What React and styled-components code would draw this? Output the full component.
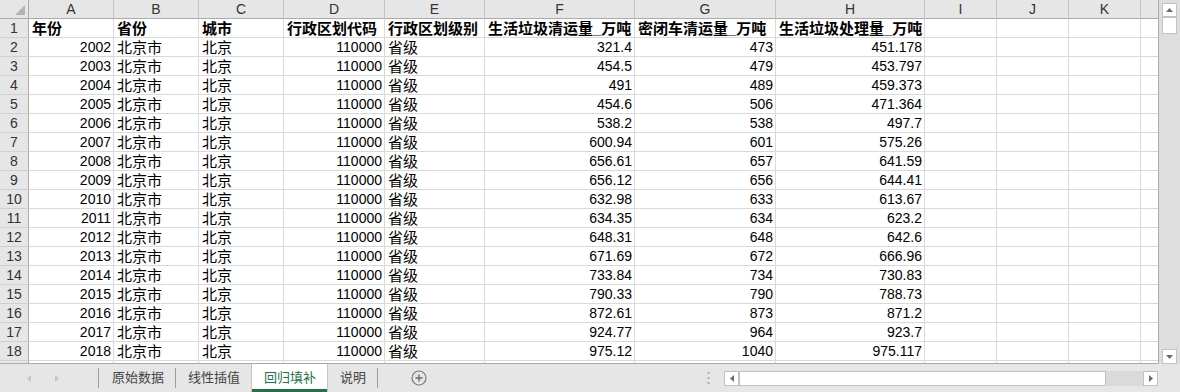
import React from "react"
import styled, {createGlobalStyle} from "styled-components"

const GlobalStyle = createGlobalStyle`
  body {
    margin: 0;
    background: #e6e6e6;
  }
`

const columns = [
  {key: "A", width: 85},
  {key: "B", width: 85},
  {key: "C", width: 85},
  {key: "D", width: 101},
  {key: "E", width: 100},
  {key: "F", width: 150},
  {key: "G", width: 141},
  {key: "H", width: 149},
  {key: "I", width: 72},
  {key: "J", width: 72},
  {key: "K", width: 72},
  {key: "", width: 18},
]

const heads = ["年份", "省份", "城市", "行政区划代码", "行政区划级别", "生活垃圾清运量_万吨", "密闭车清运量_万吨", "生活垃圾处理量_万吨"]

const values = [
  [2002, "321.4", "473", "451.178"],
  [2003, "454.5", "479", "453.797"],
  [2004, "491", "489", "459.373"],
  [2005, "454.6", "506", "471.364"],
  [2006, "538.2", "538", "497.7"],
  [2007, "600.94", "601", "575.26"],
  [2008, "656.61", "657", "641.59"],
  [2009, "656.12", "656", "644.41"],
  [2010, "632.98", "633", "613.67"],
  [2011, "634.35", "634", "623.2"],
  [2012, "648.31", "648", "642.6"],
  [2013, "671.69", "672", "666.96"],
  [2014, "733.84", "734", "730.83"],
  [2015, "790.33", "790", "788.73"],
  [2016, "872.61", "873", "871.2"],
  [2017, "924.77", "964", "923.7"],
  [2018, "975.12", "1040", "975.117"],
]

const tabs = ["原始数据", "线性插值", "回归填补", "说明"]

const Window = styled.div`
  width: 1180px;
  height: 392px;
  display: flex;
  flex-direction: column;
  overflow: hidden;
  background: #e6e6e6;
  font-family: "Liberation Sans", "Noto Sans CJK SC", sans-serif;
`
const Sheet = styled.div`
  display: flex;
  height: 364px;
`
const GridArea = styled.div`
  box-sizing: border-box;
  width: 1159px;
  height: 364px;
  overflow: hidden;
  background: #fff;
  border-right: 1px solid #ababab;
  border-bottom: 1px solid #ababab;
`
const Grid = styled.div`
  display: grid;
  grid-template-columns: 29px ${columns.map(c => c.width + "px").join(" ")};
  grid-auto-rows: 19px;
`
const Corner = styled.div`
  box-sizing: border-box;
  position: relative;
  background: #e6e6e6;
  border-right: 1px solid #ababab;
  border-bottom: 1px solid #ababab;

  &::after {
    content: '';
    position: absolute;
    right: 3px;
    bottom: 3px;
    border-left: 10px solid transparent;
    border-bottom: 10px solid #b4b4b4;
  }
`
const ColHead = styled.div`
  box-sizing: border-box;
  background: #e6e6e6;
  border-right: 1px solid #c4c4c4;
  border-bottom: 1px solid #ababab;
  color: #333;
  font-size: 14px;
  line-height: 18px;
  text-align: center;
`
const RowHead = styled.div`
  box-sizing: border-box;
  background: #e6e6e6;
  border-right: 1px solid #ababab;
  border-bottom: 1px solid #cfcfcf;
  color: #333;
  font-size: 14px;
  line-height: 18px;
  text-align: center;
`
const Cell = styled.div`
  box-sizing: border-box;
  border-right: 1px solid #d9d9d9;
  border-bottom: 1px solid #d9d9d9;
  padding: 1px 2px 0 3px;
  overflow: hidden;
  white-space: nowrap;
  color: #000;
  line-height: 17px;
  font-size: ${p => p.$num ? "14px" : "15px"};
  font-weight: ${p => p.$bold ? 700 : 400};
  text-align: ${p => p.$num ? "right" : "left"};
`
const VScroll = styled.div`
  display: flex;
  flex-direction: column;
  width: 21px;
  padding: 3px 3px 0 3px;
  box-sizing: border-box;
  background: #dedede;
`
const ScrollBox = styled.div`
  box-sizing: border-box;
  display: flex;
  align-items: center;
  justify-content: center;
  width: ${p => p.$w || "15px"};
  height: ${p => p.$h || "14px"};
  background: #fff;
  border: 1px solid #c2c2c2;
  flex-shrink: 0;
`
const Fill = styled.div`
  flex: 1;
`
const TabBar = styled.div`
  display: flex;
  height: 28px;
  align-items: stretch;
`
const Nav = styled.div`
  display: flex;
  align-items: center;
  gap: 24px;
  width: 100px;
  padding-left: 27px;
  box-sizing: border-box;
  border-right: 1px solid transparent;
  position: relative;

  &::after {
    content: '';
    position: absolute;
    right: 0;
    top: 4px;
    bottom: 4px;
    width: 1px;
    background: #9c9c9c;
  }
`
const Tab = styled.div`
  position: relative;
  display: flex;
  align-items: center;
  padding: 0 11px 0 12px;
  font-size: 13px;
  line-height: 16px;
  color: ${p => p.$active ? "#217346" : "#444"};
  background: ${p => p.$active ? "#fff" : "transparent"};
  border-right: 1px solid ${p => p.$active ? "#c6c6c6" : "transparent"};
  box-shadow: ${p => p.$active ? "inset 0 -3px 0 #217346, -1px 0 0 #c6c6c6" : "none"};

  &::after {
    content: '';
    display: ${p => p.$active ? "none" : "block"};
    position: absolute;
    right: -1px;
    top: 4px;
    bottom: 4px;
    width: 1px;
    background: #9c9c9c;
  }
`
const AddButton = styled.div`
  display: flex;
  align-items: center;
  margin-left: 33px;
`
const Dots = styled.div`
  display: flex;
  align-items: center;
  margin-left: 280px;
`
const HScroll = styled.div`
  display: flex;
  align-items: center;
  margin-left: 14px;
  width: 434px;
`
const HTrack = styled.div`
  display: flex;
  width: 434px;
  height: 15px;
  background: #dadada;
`

function Arrow({dir, color = "#6b6b6b"}) {
  const pts = {
    up: "0,4 3.5,0 7,4",
    down: "0,0 3.5,4 7,0",
    left: "4,0 0,3.5 4,7",
    right: "0,0 4,3.5 0,7",
  }[dir]
  const vertical = dir === "up" || dir === "down"
  return (
    <svg width={vertical ? 7 : 4} height={vertical ? 4 : 7} viewBox={vertical ? "0 0 7 4" : "0 0 4 7"}>
      <polygon points={pts} fill={color}/>
    </svg>
  )
}

function App() {
  return (
    <>
      <GlobalStyle/>
      <Window>
        <Sheet>
          <GridArea>
            <Grid>
              <Corner/>
              {columns.map((c, i) => <ColHead key={i}>{c.key}</ColHead>)}

              <RowHead>1</RowHead>
              {columns.map((c, i) => (
                <Cell key={i} $bold>{heads[i] || ""}</Cell>
              ))}

              {values.map((v, r) => (
                <React.Fragment key={v[0]}>
                  <RowHead>{r + 2}</RowHead>
                  <Cell $num>{v[0]}</Cell>
                  <Cell>北京市</Cell>
                  <Cell>北京</Cell>
                  <Cell $num>110000</Cell>
                  <Cell>省级</Cell>
                  <Cell $num>{v[1]}</Cell>
                  <Cell $num>{v[2]}</Cell>
                  <Cell $num>{v[3]}</Cell>
                  <Cell/>
                  <Cell/>
                  <Cell/>
                  <Cell/>
                </React.Fragment>
              ))}

              {/* row 19, only its top edge shows */}
              <RowHead/>
              {columns.map((c, i) => <Cell key={i}/>)}
            </Grid>
          </GridArea>
          <VScroll>
            <ScrollBox><Arrow dir="up"/></ScrollBox>
            <ScrollBox $h="17px"/>
            <Fill/>
            <ScrollBox $h="15px"><Arrow dir="down"/></ScrollBox>
          </VScroll>
        </Sheet>
        <TabBar>
          <Nav>
            <Arrow dir="left" color="#c4c4c4"/>
            <Arrow dir="right" color="#c4c4c4"/>
          </Nav>
          {tabs.map(t => (
            <Tab key={t} $active={t === "回归填补"}>{t}</Tab>
          ))}
          <AddButton>
            <svg width="16" height="16" viewBox="0 0 16 16">
              <circle cx="8" cy="8" r="7" fill="none" stroke="#7a7a7a" strokeWidth="1.2"/>
              <path d="M8 4.5v7M4.5 8h7" stroke="#6a6a6a" strokeWidth="1.4"/>
            </svg>
          </AddButton>
          <Dots>
            <svg width="3" height="12" viewBox="0 0 3 12">
              <rect x="0.5" y="0" width="2" height="2" fill="#b0b0b0"/>
              <rect x="0.5" y="5" width="2" height="2" fill="#b0b0b0"/>
              <rect x="0.5" y="10" width="2" height="2" fill="#b0b0b0"/>
            </svg>
          </Dots>
          <HScroll>
            <HTrack>
              <ScrollBox $w="15px" $h="15px"><Arrow dir="left"/></ScrollBox>
              <ScrollBox $w="367px" $h="15px"/>
              <Fill/>
              <ScrollBox $w="15px" $h="15px"><Arrow dir="right"/></ScrollBox>
            </HTrack>
          </HScroll>
        </TabBar>
      </Window>
    </>
  )
}

export default App
